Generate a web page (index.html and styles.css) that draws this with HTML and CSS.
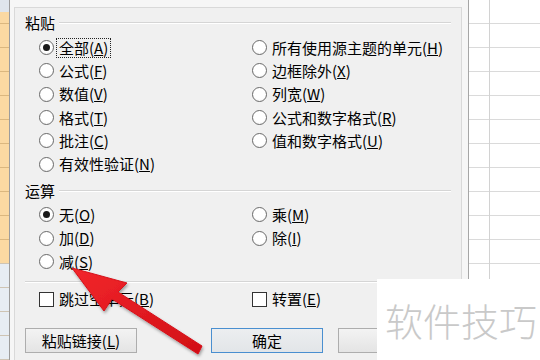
FILE: index.html
```html
<!DOCTYPE html>
<html lang="zh-CN">
<head>
  <meta charset="UTF-8" />
  <title>选择性粘贴</title>
  <link rel="stylesheet" href="styles.css">
</head>
<body>
  <div class="screen">
    <div class="rowhead"></div>

    <div class="dialog">
      <div class="panel">
        <div class="legend"><span>粘贴</span><i class="rule"></i></div>
        <div class="opts paste">
          <label class="opt"><span class="radio on"></span><span class="focus">全部(<u>A</u>)</span></label>
          <label class="opt"><span class="radio"></span><span>所有使用源主题的单元(<u>H</u>)</span></label>
          <label class="opt"><span class="radio"></span><span>公式(<u>F</u>)</span></label>
          <label class="opt"><span class="radio"></span><span>边框除外(<u>X</u>)</span></label>
          <label class="opt"><span class="radio"></span><span>数值(<u>V</u>)</span></label>
          <label class="opt"><span class="radio"></span><span>列宽(<u>W</u>)</span></label>
          <label class="opt"><span class="radio"></span><span>格式(<u>T</u>)</span></label>
          <label class="opt"><span class="radio"></span><span>公式和数字格式(<u>R</u>)</span></label>
          <label class="opt"><span class="radio"></span><span>批注(<u>C</u>)</span></label>
          <label class="opt"><span class="radio"></span><span>值和数字格式(<u>U</u>)</span></label>
          <label class="opt"><span class="radio"></span><span>有效性验证(<u>N</u>)</span></label>
        </div>

        <div class="legend ops-legend"><span>运算</span><i class="rule"></i></div>
        <div class="opts ops">
          <label class="opt"><span class="radio on"></span><span>无(<u>O</u>)</span></label>
          <label class="opt"><span class="radio"></span><span>乘(<u>M</u>)</span></label>
          <label class="opt"><span class="radio"></span><span>加(<u>D</u>)</span></label>
          <label class="opt"><span class="radio"></span><span>除(<u>I</u>)</span></label>
          <label class="opt"><span class="radio"></span><span>减(<u>S</u>)</span></label>
        </div>

        <div class="sep"></div>
        <div class="opts checks">
          <label class="opt"><span class="check"></span><span>跳过空单元(<u>B</u>)</span></label>
          <label class="opt"><span class="check"></span><span>转置(<u>E</u>)</span></label>
        </div>

        <div class="buttons">
          <button class="btn">粘贴链接(<u>L</u>)</button>
          <button class="btn primary">确定</button>
          <button class="btn cancel"></button>
        </div>
      </div>
    </div>

    <div class="sheet"></div>

    <svg class="arrow" width="540" height="360" viewBox="0 0 540 360">
      <defs>
        <filter id="shadow" x="-20%" y="-20%" width="140%" height="140%">
          <feDropShadow dx="1" dy="2" stdDeviation="1.6" flood-color="#000" flood-opacity="0.35"/>
        </filter>
        <linearGradient id="red" x1="0" y1="0" x2="1" y2="1">
          <stop offset="0" stop-color="#f2262b"/>
          <stop offset="1" stop-color="#d10f16"/>
        </linearGradient>
      </defs>
      <polygon filter="url(#shadow)" fill="url(#red)" stroke="#d6121a" stroke-width="1" stroke-linejoin="round"
        points="72,268 127,283 118,292 202,346 198,354 112,299 104,311"/>
    </svg>

    <div class="watermark">软件技巧</div>
  </div>
</body>
</html>
```

FILE: styles.css
```css
body {
  margin: 0;
  font-family: "Noto Sans CJK SC", "Liberation Sans", sans-serif;
  font-size: 15px;
  color: #000;
}
.screen {
  position: relative;
  display: flex;
  width: 540px;
  height: 360px;
  overflow: hidden;
  background: #fff;
}

/* row headers of the sheet behind */
.rowhead {
  width: 9px;
  background:
    repeating-linear-gradient(to bottom, transparent 0 23px, rgba(160, 120, 60, 0.35) 23px 24px),
    linear-gradient(to bottom, #dfe5ec 0 12px, #fbd9a2 12px 263px, #e7edf4 263px);
}
.sheet {
  flex: 1;
  background:
    linear-gradient(to right, transparent 20px, #d2d2d2 20px 21px, transparent 21px),
    repeating-linear-gradient(to bottom, #fff 0 23px, #dadada 23px 24px);
}

/* dialog */
.dialog {
  width: 460px;
  box-sizing: border-box;
  border-left: 1px solid #9c9c9c;
  border-right: 1px solid #a6a6a6;
  background: #f6f6f6;
  padding: 7px 6px 0 4px;
}
.panel {
  height: 100%;
  box-sizing: border-box;
  border: 1px solid #d9d9d9;
  border-bottom: 0;
  background: #f0f0f0;
  padding: 5px 10px 0;
}
.legend {
  display: flex;
  align-items: center;
  height: 20px;
  line-height: 20px;
}
.legend .rule {
  flex: 1;
  margin-left: 4px;
  border-top: 1px solid #d5d5d5;
  border-bottom: 1px solid #fff;
}
.ops-legend {
  margin-top: 5px;
}
.opts {
  display: grid;
  grid-template-columns: 213px 1fr;
  grid-auto-rows: 23.3px;
  margin: 3px 0 0 15px;
}
.ops {
  margin-top: 2.5px;
}
.checks {
  margin-top: 4.8px;
}
.opt {
  display: flex;
  align-items: center;
  gap: 6px;
  white-space: nowrap;
  line-height: 20px;
}
.radio {
  display: grid;
  place-items: center;
  width: 15px;
  height: 15px;
  margin-left: -1px;
  margin-right: -1px;
  box-sizing: border-box;
  border: 1px solid #6a6a6a;
  border-radius: 50%;
  background: radial-gradient(circle at 50% 40%, #fff 55%, #ececec);
}
.radio.on::after {
  content: "";
  width: 7px;
  height: 7px;
  border-radius: 50%;
  background: #1a1a1a;
}
.check {
  width: 15px;
  height: 15px;
  margin-left: -1px;
  margin-right: -1px;
  box-sizing: border-box;
  border: 1px solid #333;
  background: #fff;
}
.focus {
  outline: 1px dotted #222;
  margin-left: -2px;
  padding: 0 2px;
  line-height: 18px;
}
.sep {
  margin-top: 7.6px;
  border-top: 1px solid #d5d5d5;
  border-bottom: 1px solid #fff;
}

/* buttons */
.buttons {
  display: flex;
  margin-top: 16.9px;
}
.btn {
  width: 112px;
  height: 25px;
  padding: 0;
  border: 1px solid #adadad;
  background: linear-gradient(#f3f3f3, #e4e4e4);
  font: inherit;
  line-height: 23px;
  color: #000;
}
.btn.primary {
  margin-left: 74px;
  border-color: #4a8fd0;
  background: linear-gradient(#eceef0, #e2e5e8);
}
.btn.cancel {
  margin-left: 15px;
}

/* overlays */
.arrow {
  position: absolute;
  left: 0;
  top: 0;
  pointer-events: none;
}
.watermark {
  position: absolute;
  left: 377px;
  top: 279px;
  width: 163px;
  height: 81px;
  box-sizing: border-box;
  padding-left: 8px;
  background: #fff;
  color: #c9c9c9;
  font-size: 38px;
  font-weight: 300;
  line-height: 81px;
  white-space: nowrap;
}
```
